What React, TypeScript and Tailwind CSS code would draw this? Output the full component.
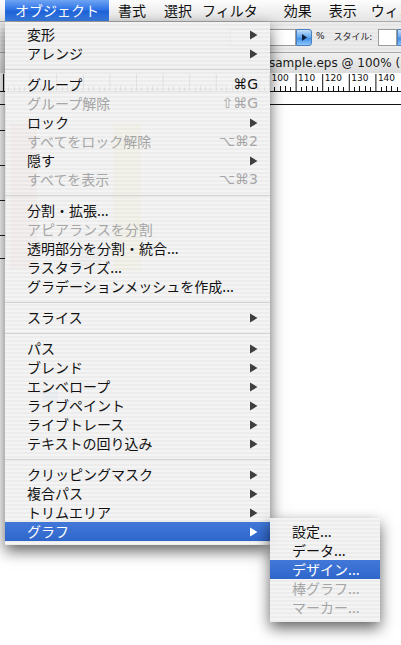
import clsx from "clsx";

type Item = {
  label: string;
  sub?: boolean;
  disabled?: boolean;
  shortcut?: string;
  active?: boolean;
};

const sections: Item[][] = [
  [
    { label: "変形", sub: true },
    { label: "アレンジ", sub: true },
  ],
  [
    { label: "グループ", shortcut: "⌘G" },
    { label: "グループ解除", shortcut: "⇧⌘G", disabled: true },
    { label: "ロック", sub: true },
    { label: "すべてをロック解除", shortcut: "⌥⌘2", disabled: true },
    { label: "隠す", sub: true },
    { label: "すべてを表示", shortcut: "⌥⌘3", disabled: true },
  ],
  [
    { label: "分割・拡張..." },
    { label: "アピアランスを分割", disabled: true },
    { label: "透明部分を分割・統合..." },
    { label: "ラスタライズ..." },
    { label: "グラデーションメッシュを作成..." },
  ],
  [{ label: "スライス", sub: true }],
  [
    { label: "パス", sub: true },
    { label: "ブレンド", sub: true },
    { label: "エンベロープ", sub: true },
    { label: "ライブペイント", sub: true },
    { label: "ライブトレース", sub: true },
    { label: "テキストの回り込み", sub: true },
  ],
  [
    { label: "クリッピングマスク", sub: true },
    { label: "複合パス", sub: true },
    { label: "トリムエリア", sub: true },
    { label: "グラフ", sub: true, active: true },
  ],
];

const graphItems: Item[] = [
  { label: "設定..." },
  { label: "データ..." },
  { label: "デザイン...", active: true },
  { label: "棒グラフ...", disabled: true },
  { label: "マーカー...", disabled: true },
];

const menuBg =
  "bg-[repeating-linear-gradient(to_bottom,rgba(243,243,243,0.93)_0px,rgba(243,243,243,0.93)_2px,rgba(235,235,235,0.93)_2px,rgba(235,235,235,0.93)_4px)]";

const Arrow = ({ white }: { white?: boolean }) => (
  <svg width="8" height="10" viewBox="0 0 8 10">
    <polygon points="0,0.5 7.5,5 0,9.5" fill={white ? "#ffffff" : "#3f3f3f"} />
  </svg>
);

const MenuRow = ({ item, pad }: { item: Item; pad: string }) => (
  <div
    className={clsx(
      "flex h-[19px] items-center pr-[12px]",
      pad,
      item.active && "bg-[linear-gradient(to_bottom,#4178d8,#2f66cb)]"
    )}
  >
    <span
      className={clsx(
        "whitespace-nowrap text-[14px] leading-[19px]",
        item.active ? "text-white" : item.disabled ? "text-[#a6a6a6]" : "text-[#111]"
      )}
    >
      {item.label}
    </span>
    {item.shortcut && (
      <span
        className={clsx(
          "ml-auto font-['DejaVu_Sans',sans-serif] text-[14px] leading-[19px]",
          item.disabled ? "text-[#a6a6a6]" : "text-[#111]"
        )}
      >
        {item.shortcut}
      </span>
    )}
    {item.sub && (
      <span className="ml-auto flex">
        <Arrow white={item.active} />
      </span>
    )}
  </div>
);

const Separator = () => (
  <div className="flex h-[12px] items-center">
    <div className="h-px w-full bg-[#d2d2d2]" />
  </div>
);

const Ruler = () => {
  const majors: number[] = [];
  for (let i = 0; i <= 15; i++) majors.push(3 + i * 26.6);
  return (
    <svg width="401" height="19" className="block">
      <rect width="401" height="19" fill="#ffffff" />
      {majors.map((x, i) => (
        <g key={i}>
          <line x1={x + 0.5} y1="1" x2={x + 0.5} y2="18" stroke="#111" />
          {[1, 2, 3, 4].map((m) => (
            <line
              key={m}
              x1={Math.round(x + (m * 26.6) / 5) + 0.5}
              y1={m === 2 || m === 3 ? 13 : 14}
              x2={Math.round(x + (m * 26.6) / 5) + 0.5}
              y2="18"
              stroke="#111"
            />
          ))}
          {x > 260 && (
            <text
              x={x + 2.5}
              y="8"
              fontSize="9"
              fontFamily="DejaVu Sans, sans-serif"
              fill="#111"
            >
              {i * 10}
            </text>
          )}
        </g>
      ))}
      <line x1="0" y1="18.5" x2="401" y2="18.5" stroke="#111" />
    </svg>
  );
};

const Canvas = () => (
  <svg width="401" height="553" className="block">
    <rect width="401" height="553" fill="#ffffff" />
    <rect x="10" y="31" width="27" height="146" fill="#ffb9b9" />
    <rect x="113" y="31" width="28" height="148" fill="#ecec8a" />
    <rect x="75" y="156" width="26" height="18" fill="#bdbdbd" />
    <rect x="42" y="298" width="16" height="12" fill="#9cc0ea" />
    <line x1="0" y1="12.5" x2="6" y2="12.5" stroke="#111" />
    <line x1="270" y1="12.5" x2="401" y2="12.5" stroke="#111" />
    <line x1="5.5" y1="12" x2="5.5" y2="166" stroke="#222" />
    {[38, 73, 108, 143, 166].map((y) => (
      <line key={y} x1="0" y1={y + 0.5} x2="5" y2={y + 0.5} stroke="#222" />
    ))}
  </svg>
);

const AquaButton = () => (
  <div className="flex h-[17px] w-[16px] shrink-0 items-center justify-center rounded-r-[3px] border border-[#4a7fc0] bg-[linear-gradient(to_bottom,#c5e1fb,#5aa3ee_50%,#3b8ae6_51%,#8cc6fa)]">
    <svg width="5" height="7" viewBox="0 0 5 7">
      <polygon points="0,0 5,3.5 0,7" fill="#10213d" />
    </svg>
  </div>
);

const menuTitles: { label: string; ml: string }[] = [
  { label: "書式", ml: "ml-[9px]" },
  { label: "選択", ml: "ml-[18px]" },
  { label: "フィルタ", ml: "ml-[10px]" },
  { label: "効果", ml: "ml-[26px]" },
  { label: "表示", ml: "ml-[17px]" },
  { label: "ウィンドウ", ml: "ml-[14px]" },
];

export default function App() {
  return (
    <div className="relative h-[645px] w-[401px] overflow-hidden bg-white font-['Noto_Sans_CJK_JP',sans-serif]">
      {/* menu bar */}
      <div className="flex h-[22px] items-stretch overflow-hidden border-b border-[#a9a9a9] bg-[linear-gradient(to_bottom,#fdfdfd,#eeeeee_60%,#e4e4e4)] text-[14px] leading-[21px] text-[#111]">
        <div className="ml-[5px] shrink-0 whitespace-nowrap bg-[linear-gradient(to_bottom,#6ea4f4,#2f74e6_45%,#1e62d8_55%,#3c80e8)] px-[10px] text-white">
          オブジェクト
        </div>
        {menuTitles.map((t) => (
          <div key={t.label} className={clsx("shrink-0 whitespace-nowrap", t.ml)}>
            {t.label}
          </div>
        ))}
      </div>

      {/* control palette */}
      <div className="flex h-[30px] items-center overflow-hidden bg-[repeating-linear-gradient(to_bottom,#ececec_0px,#ececec_2px,#e5e5e5_2px,#e5e5e5_4px)] pl-[230px]">
        <div className="h-[17px] w-[66px] shrink-0 border border-[#9b9b9b] bg-white" />
        <AquaButton />
        <span className="ml-[4px] shrink-0 font-['DejaVu_Sans',sans-serif] text-[9px] text-[#222]">%</span>
        <span className="ml-[9px] shrink-0 whitespace-nowrap text-[9px] text-[#222]">スタイル:</span>
        <div className="ml-[6px] h-[17px] w-[19px] shrink-0 border border-[#9b9b9b] bg-white" />
        <AquaButton />
      </div>

      {/* document title bar */}
      <div className="flex h-[21px] items-center overflow-hidden border-t border-[#a8a8a8] bg-[linear-gradient(to_bottom,#f0f0f0,#dcdcdc)] pl-[269px]">
        <span className="shrink-0 whitespace-nowrap font-['DejaVu_Sans',sans-serif] text-[12px] text-[#1a1a1a]">
          sample.eps @ 100% (RGB/プレビュー)
        </span>
      </div>

      <Ruler />
      <Canvas />

      {/* Object menu */}
      <div
        className={clsx(
          "absolute left-[5px] top-[22px] w-[265px] pb-[4px] pt-[3px] shadow-[0_6px_14px_rgba(0,0,0,0.62)]",
          menuBg
        )}
      >
        {sections.map((sec, i) => (
          <div key={i}>
            {i > 0 && <Separator />}
            {sec.map((item) => (
              <MenuRow key={item.label} item={item} pad="pl-[22px]" />
            ))}
          </div>
        ))}
      </div>

      {/* Graph submenu */}
      <div
        className={clsx(
          "absolute left-[270px] top-[518px] w-[110px] pb-[5px] pt-[4px] shadow-[0_6px_14px_rgba(0,0,0,0.62)]",
          menuBg
        )}
      >
        {graphItems.map((item) => (
          <MenuRow key={item.label} item={item} pad="pl-[22px]" />
        ))}
      </div>
    </div>
  );
}
